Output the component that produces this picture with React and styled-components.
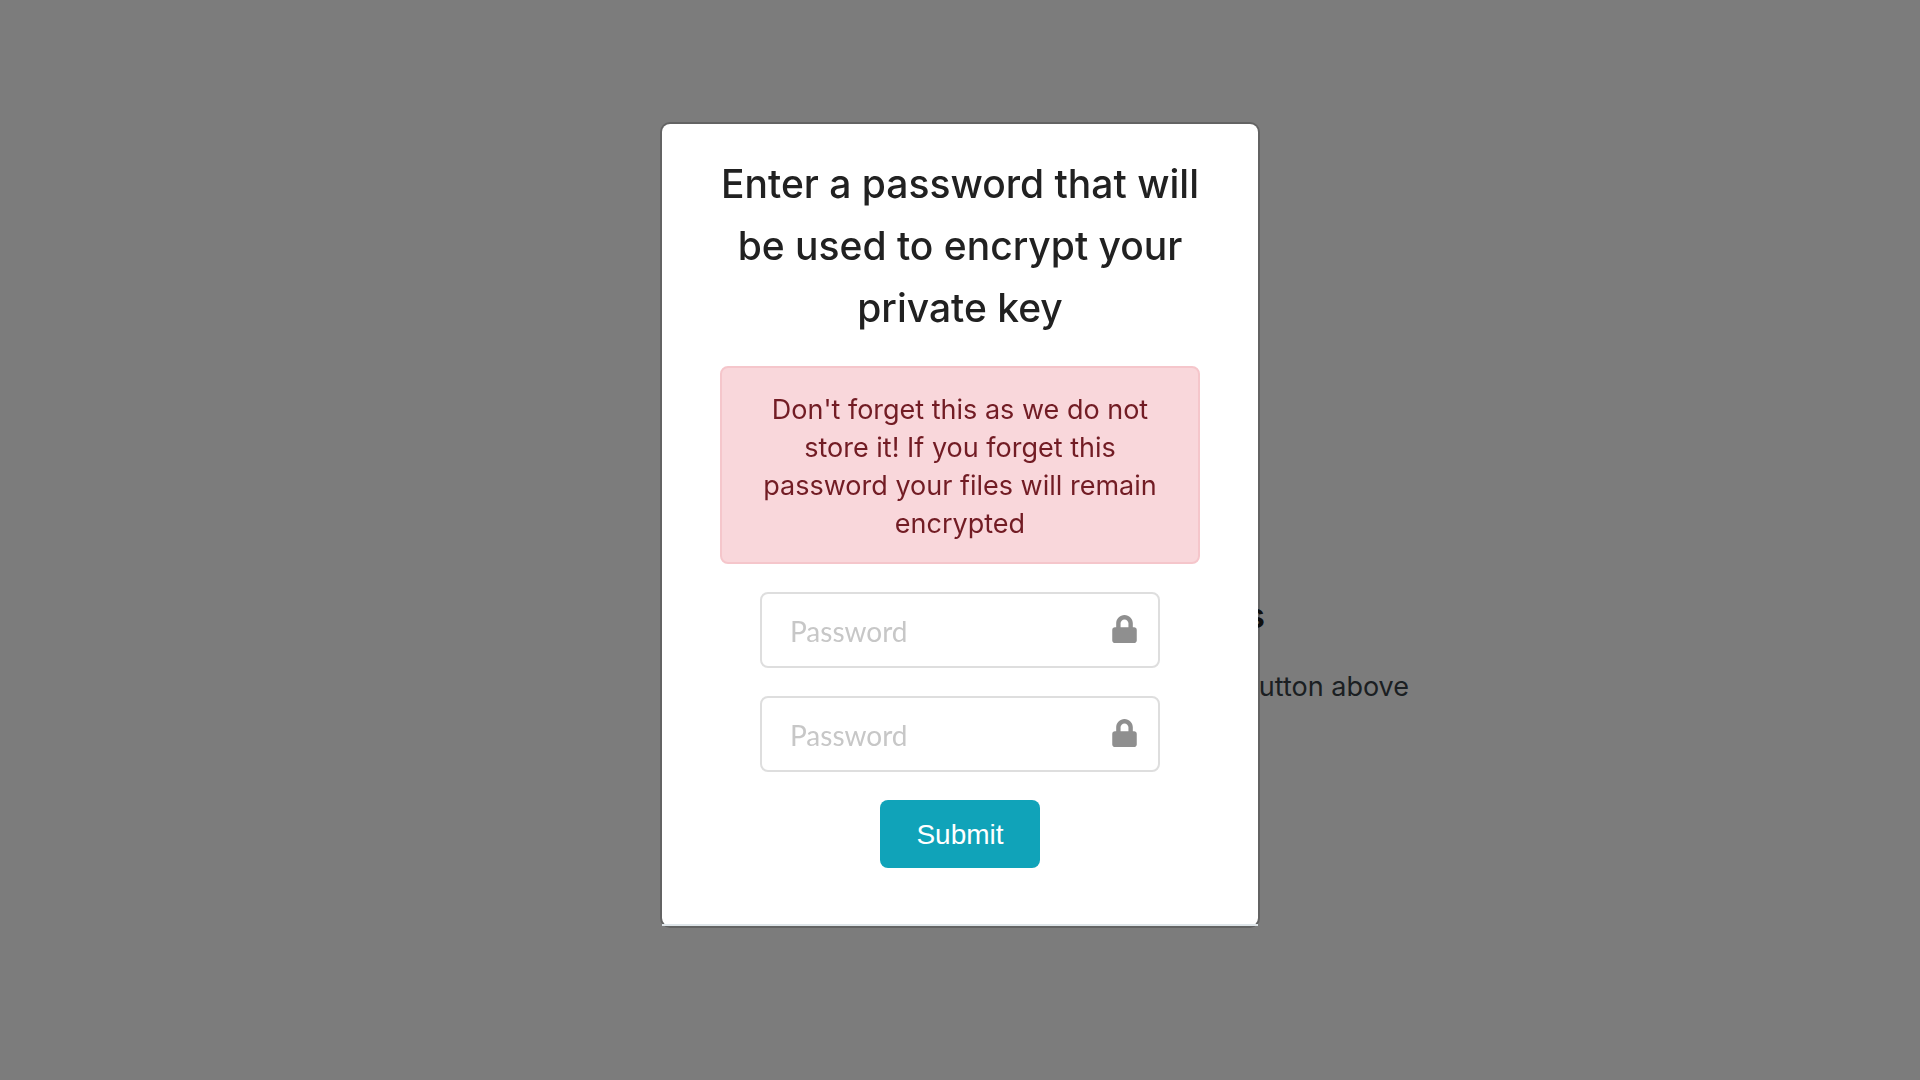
import React from "react";
import styled, { createGlobalStyle } from "styled-components";

const GlobalStyle = createGlobalStyle`
  *, *::before, *::after { box-sizing: border-box; }
  body {
    margin: 0;
    background: #f8f8f8;
    color: #363e44;
    font-family: Inter, "Liberation Sans", sans-serif;
    font-size: 27px;
    line-height: 38px;
  }
`;

const Page = styled.main`
  display: flex;
  flex-direction: column;
  justify-content: center;
  align-items: flex-end;
  min-height: 100vh;
  padding: 222px 511px 0 0;
`;

const PageTitle = styled.h2`
  margin: 0 144px 32px 0;
  color: #212121;
  font-size: 34px;
  font-weight: 600;
  line-height: 40px;
`;

const PageHint = styled.p`
  margin: 0;
`;

const Backdrop = styled.div`
  position: fixed;
  inset: 0;
  display: flex;
  justify-content: center;
  align-items: flex-start;
  padding-top: 122px;
  overflow: auto;
  background: rgba(0, 0, 0, 0.5);
`;

const Dialog = styled.section`
  width: 100%;
  max-width: 600px;
  border: 2px solid rgba(0, 0, 0, 0.2);
  border-radius: 10px;
  background: #fff;
  background-clip: padding-box;
  text-align: center;
`;

const DialogForm = styled.form`
  display: flex;
  flex-direction: column;
  align-items: center;
  gap: 28px;
  padding: 28px 58px 56px;
`;

const DialogTitle = styled.h1`
  margin: 0 -10px;
  padding-top: 1px;
  height: 186px;
  color: #212121;
  font-size: 39px;
  font-weight: 500;
  line-height: 62px;
`;

const Warning = styled.p`
  width: 100%;
  margin: 0;
  padding: 23px 40px 19px;
  border: 2px solid #f5c6cb;
  border-radius: 8px;
  background: #f9d7db;
  color: #721c24;
`;

const Field = styled.label`
  display: flex;
  align-items: center;
  width: 100%;
  max-width: 400px;
  height: 76px;
  padding: 2px 21px 0 28px;
  border: 2px solid #dedede;
  border-radius: 8px;
  background: #fff;
`;

const PasswordInput = styled.input`
  flex: 1;
  min-width: 0;
  padding: 0;
  border: 0;
  outline: 0;
  background: transparent;
  color: #212121;
  font-family: Lato, sans-serif;
  font-size: 28px;
  line-height: 34px;

  &::placeholder {
    color: #c7c7c7;
    opacity: 1;
  }
`;

const LockGlyph = styled.svg`
  flex: none;
  width: 25px;
  height: 28px;
  margin-bottom: 4px;
  fill: #8f8f8f;
`;

const SubmitButton = styled.button`
  height: 68px;
  min-width: 160px;
  padding: 2px 36px 0;
  border: 0;
  border-radius: 8px;
  background: #10a3b9;
  color: #fff;
  font-family: "Liberation Sans", Arial, sans-serif;
  font-size: 28px;
  line-height: 34px;
`;

const DialogFooter = styled.div`
  border-top: 2px solid #dee5e9;
`;

function PasswordField({ name, label }) {
  return (
    <Field>
      <PasswordInput type="password" name={name} placeholder="Password" aria-label={label} />
      <LockGlyph viewBox="0 0 448 512" aria-hidden="true">
        <path d="M400 224h-24v-72C376 68.2 307.800 0 224 0S72 68.200 72 152v72H48c-26.500 0-48 21.500-48 48v192c0 26.500 21.500 48 48 48h352c26.500 0 48-21.500 48-48V272c0-26.500-21.500-48-48-48zm-104 0H152v-72c0-39.700 32.300-72 72-72s72 32.300 72 72v72z" />
      </LockGlyph>
    </Field>
  );
}

export default function App() {
  return (
    <>
      <GlobalStyle />
      <Page>
        <PageTitle>s</PageTitle>
        <PageHint>button above</PageHint>
      </Page>
      <Backdrop>
        <Dialog role="dialog" aria-modal="true" aria-labelledby="dialog-title">
          <DialogForm onSubmit={(event) => event.preventDefault()}>
            <DialogTitle id="dialog-title">
              Enter a password that will be used to encrypt your private key
            </DialogTitle>
            <Warning role="alert">
              Don't forget this as we do not store it! If you forget this password your files will
              remain encrypted
            </Warning>
            <PasswordField name="password" label="Password" />
            <PasswordField name="confirmation" label="Confirm password" />
            <SubmitButton type="submit">Submit</SubmitButton>
          </DialogForm>
          <DialogFooter />
        </Dialog>
      </Backdrop>
    </>
  );
}
